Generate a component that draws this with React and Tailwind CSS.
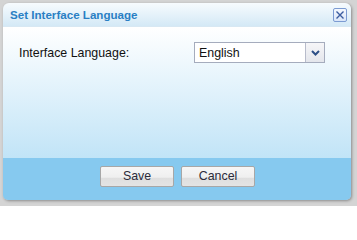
export default function App() {
  return (
    <div className="w-[357px] h-[206px] bg-[#d4d4d4] pt-[3px] pl-[3px]" style={{ fontFamily: '"Liberation Sans", Arial, sans-serif' }}>
      <div className="w-[348px] h-[197px] flex flex-col rounded-t-[6px] rounded-b-[5px] overflow-hidden shadow-[1px_1px_3px_rgba(0,0,0,0.35)]">
        <div className="h-[24px] flex items-center justify-between pl-[7px] pr-[4px] bg-gradient-to-b from-[#f7fbfe] to-[#d4e9f6] border-b border-[#d8e8f3]">
          <span className="text-[11.6px] font-bold text-[#2a7fc4] leading-none">Set Interface Language</span>
          <div className="w-[14px] h-[14px] border border-[#7c9bd2] rounded-[2px] bg-gradient-to-b from-[#f4f8fe] to-[#dae6f8] flex items-center justify-center">
            <svg width="10" height="10" viewBox="0 0 10 10">
              <path d="M1.5 1.5 L8.5 8.5 M8.5 1.5 L1.5 8.5" stroke="#3b5ca0" strokeWidth="1.4" />
            </svg>
          </div>
        </div>
        <div className="flex-1 bg-gradient-to-b from-[#ffffff] to-[#c1e4f7] pt-[15px] pl-[16px]">
          <div className="flex items-center">
            <span className="w-[175px] pt-[2px] text-[12.4px] text-[#111]">Interface Language:</span>
            <div className="w-[131px] h-[21px] border border-[#a5acbd] bg-white flex">
              <div className="flex-1 flex items-center pl-[4px] pt-[2px] text-[12.4px] text-[#111]">English</div>
              <div className="w-[19px] border-l border-[#b8bccb] bg-gradient-to-b from-[#f6f6f8] to-[#e4e6ec] flex items-center justify-center">
                <svg width="9" height="6" viewBox="0 0 9 6">
                  <path d="M1 1 L4.5 4.5 L8 1" stroke="#2d4f86" strokeWidth="2" fill="none" />
                </svg>
              </div>
            </div>
          </div>
        </div>
        <div className="h-[42px] bg-[#86c9ef] flex justify-center gap-[7px] pt-[8px] pl-[1px]">
          <button className="w-[74px] h-[21px] border border-[#a7a7a7] rounded-[2px] bg-[linear-gradient(to_bottom,#f6f6f6_0%,#efefef_55%,#dedede_56%,#e4e4e4_100%)] text-[12.4px] text-[#2b2b3a] leading-none">Save</button>
          <button className="w-[74px] h-[21px] border border-[#a7a7a7] rounded-[2px] bg-[linear-gradient(to_bottom,#f6f6f6_0%,#efefef_55%,#dedede_56%,#e4e4e4_100%)] text-[12.4px] text-[#2b2b3a] leading-none">Cancel</button>
        </div>
      </div>
    </div>
  );
}
